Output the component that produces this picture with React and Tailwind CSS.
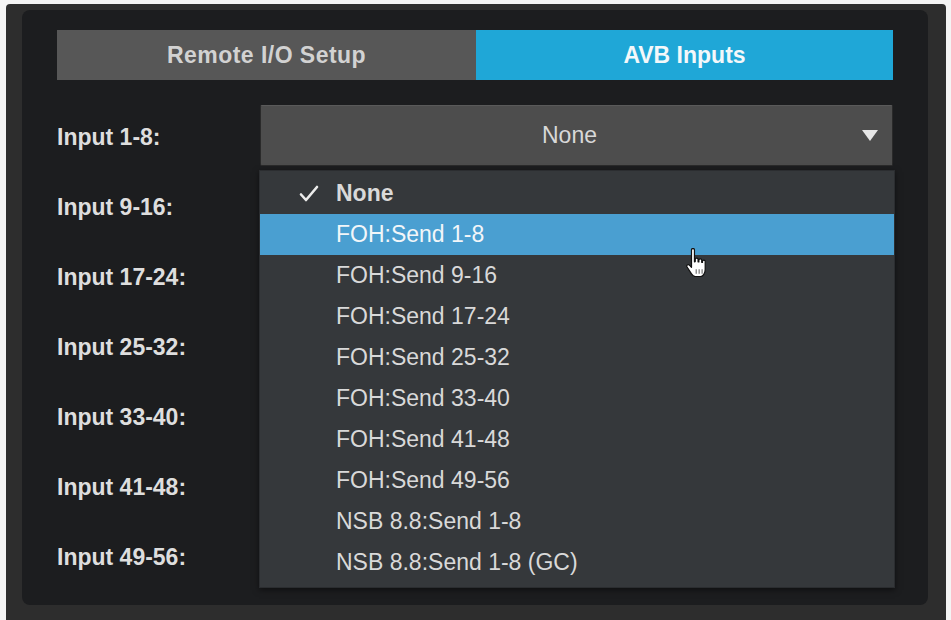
import React from 'react';

// etichetele din stanga, cate una pe rand
const inputs = [
  'Input 1-8:', 'Input 9-16:', 'Input 17-24:', 'Input 25-32:',
  'Input 33-40:', 'Input 41-48:', 'Input 49-56:',
];

// optiunile din meniul deschis
const options = [
  'None', 'FOH:Send 1-8', 'FOH:Send 9-16', 'FOH:Send 17-24', 'FOH:Send 25-32',
  'FOH:Send 33-40', 'FOH:Send 41-48', 'FOH:Send 49-56',
  'NSB 8.8:Send 1-8', 'NSB 8.8:Send 1-8 (GC)',
];

function Caret() {
  return (
    <svg width="16" height="11" viewBox="0 0 16 11" className="flex-shrink-0">
      <path d="M0 0h16L8 11z" fill="#e6e6e6" />
    </svg>
  );
}

function Check() {
  return (
    <svg width="20" height="17" viewBox="0 0 20 17">
      <path d="M2 9.5l5 5.5L18 2" fill="none" stroke="#ececec" strokeWidth="2.6" strokeLinecap="round" strokeLinejoin="round" />
    </svg>
  );
}

// cursorul mana de deasupra meniului
function HandCursor() {
  return (
    <svg width="24" height="29" viewBox="3.2 1.2 15.8 21.6" className="absolute left-[663px] top-[238px]">
      <path
        d="M7 2.5c0-1.2 2.2-1.2 2.2 0v9l.6-.2V9.5c0-1.1 2.1-1.1 2.1 0v2l.6.1v-1.4c0-1.1 2.1-1.1 2.1 0v1.7l.6.1v-.9c0-1.1 2-1.1 2 0v6.2c0 2.6-1.6 5.2-3.6 5.2H9.8c-1.3 0-2.1-.9-2.8-2l-3.4-5.3c-.7-1.1.9-2.2 1.8-1.2L7 15.6z"
        fill="#fff" stroke="#111" strokeWidth="0.9" strokeLinejoin="round"
      />
      <path d="M10.5 17v3.3M12.7 17v3.3M14.9 17v3.3" stroke="#666" strokeWidth="0.8" />
    </svg>
  );
}

function Dropdown({ value }) {
  return (
    <div className="flex-1 h-[61px] flex items-center bg-[#4d4d4d] border border-[#2a2a2a] border-t-[#5a5a5a] rounded-[2px] pr-[14px]">
      <span className="flex-1 text-center pl-[16px] text-[23px] text-[#d8d8d8]">{value}</span>
      <Caret />
    </div>
  );
}

export default function App() {
  return (
    <div className="w-[951px] h-[620px] bg-[#f4f4f4] pt-[4px] pl-[6px] pr-[5px] font-['Liberation_Sans',Arial,sans-serif]">
      <div className="h-full bg-[#2d2d2d] pt-[6px] pl-[16px] pr-[18px] pb-[15px] rounded-t-[4px]">
        <div className="relative h-full rounded-[8px] bg-[#1c1d1f] pt-[20px] px-[35px]">

          {/* cele doua taburi de sus */}
          <div className="flex h-[50px]">
            <div className="w-[419px] flex items-center justify-center bg-[#575757] text-[23px] font-bold text-[#d2d2d2] tracking-[0.02em]">
              Remote I/O Setup
            </div>
            <div className="flex-1 flex items-center justify-center bg-[#1fa7d7] text-[23px] font-bold text-[#f4f8fa]">
              AVB Inputs
            </div>
          </div>

          {/* randurile cu intrari; doar primul dropdown se vede, restul sunt sub meniu */}
          <div className="mt-[25px] flex flex-col gap-[9px]">
            {inputs.map((label, i) => (
              <div key={label} className="flex items-center h-[61px]">
                <span className="w-[203px] pt-[4px] text-[23px] font-bold text-[#dedede]">{label}</span>
                <Dropdown value={i === 0 ? 'None' : ''} />
              </div>
            ))}
          </div>

          {/* meniul deschis peste dropdown-uri */}
          <div className="absolute left-[237px] top-[160px] w-[636px] h-[418px] bg-[#35383b] border border-[#2b2d30] pt-[2px] shadow-[0_2px_6px_rgba(0,0,0,0.5)]">
            {options.map((opt, i) => (
              <div
                key={opt}
                className={`h-[41px] flex items-center ${i === 1 ? 'bg-[#4a9fd1] text-[#f2f6f9]' : 'text-[#d9d9d9]'}`}
              >
                <span className="w-[76px] pl-[39px] flex items-center">{i === 0 ? <Check /> : null}</span>
                <span className={`text-[23px] ${i === 0 ? 'font-bold' : ''}`}>{opt}</span>
              </div>
            ))}
          </div>

          <HandCursor />
        </div>
      </div>
    </div>
  );
}
